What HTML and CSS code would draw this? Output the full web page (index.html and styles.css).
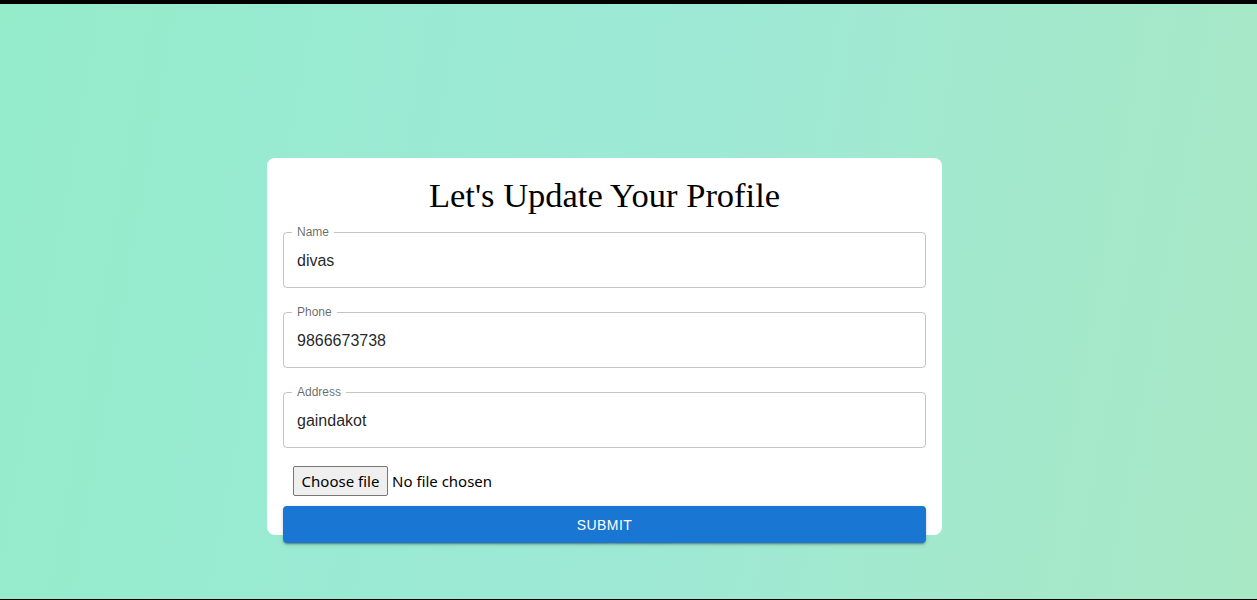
FILE: index.html
```html
<!DOCTYPE html>
<html lang="en">
<head>
<meta charset="utf-8">
<title>Update Profile</title>
<link rel="stylesheet" href="styles.css">
</head>
<body>
<div class="topbar"></div>
<main class="page">
  <form class="card">
    <h1 class="title">Let's Update Your Profile</h1>
    <fieldset class="field">
      <legend>Name</legend>
      <input class="field-input" type="text" value="divas">
    </fieldset>
    <fieldset class="field">
      <legend>Phone</legend>
      <input class="field-input" type="text" value="9866673738">
    </fieldset>
    <fieldset class="field">
      <legend>Address</legend>
      <input class="field-input" type="text" value="gaindakot">
    </fieldset>
    <div class="file-row">
      <span class="file-btn">Choose file</span>
      <span class="file-text">No file chosen</span>
    </div>
    <button class="submit" type="button">SUBMIT</button>
  </form>
</main>
<div class="bottombar"></div>
</body>
</html>
```

FILE: styles.css
```css
* { box-sizing: border-box; }
html, body { margin: 0; padding: 0; height: 100%; }
body {
  display: flex;
  flex-direction: column;
  background: linear-gradient(100deg, #94eccb 0%, #9de9d6 50%, #a8e8c5 100%);
  font-family: "Liberation Sans", Arial, sans-serif;
}
.topbar { height: 4px; background: #000; flex: none; }
.bottombar { height: 1px; background: #000; flex: none; }
.page {
  flex: 1;
  display: flex;
  justify-content: center;
  align-items: flex-start;
  padding-top: 154px;
  padding-right: 48px;
}
.card {
  width: 675px;
  height: 377px;
  background: #fff;
  border-radius: 8px;
  padding: 16px;
  display: flex;
  flex-direction: column;
}
.title {
  margin: 2px 0 0;
  font-family: "Liberation Serif", "Times New Roman", serif;
  font-weight: 400;
  font-size: 34.5px;
  line-height: 39px;
  text-align: center;
  color: #000;
}
.field {
  margin: 11px 0 0;
  padding: 0;
  border: 1px solid rgba(0,0,0,0.23);
  border-radius: 4px;
  min-width: 0;
}
.field + .field { margin-top: 18px; }
.field legend {
  margin-left: 8px;
  padding: 0 5px;
  font-size: 12px;
  line-height: 12px;
  color: rgba(0,0,0,0.6);
}
.field-input {
  display: block;
  width: 100%;
  border: 0;
  outline: 0;
  background: transparent;
  font-family: "Liberation Sans", Arial, sans-serif;
  font-size: 16px;
  line-height: 23px;
  height: 49px;
  padding: 11.5px 13px 14.5px;
  color: rgba(0,0,0,0.87);
}
.file-row {
  display: flex;
  align-items: center;
  margin: 18px 0 0 10px;
  font-family: "Noto Sans", "Open Sans", sans-serif;
  font-size: 15px;
  color: #000;
}
.file-btn {
  height: 30px;
  width: 95px;
  display: flex;
  align-items: center;
  justify-content: center;
  background: #efefef;
  border: 1px solid #767676;
  border-radius: 2px;
}
.file-text { margin-left: 4px; }
.submit {
  margin-top: 10px;
  flex: none;
  height: 37px;
  width: 100%;
  border: 0;
  border-radius: 4px;
  background: #1976d2;
  color: #fff;
  font-family: "Liberation Sans", Arial, sans-serif;
  font-size: 14px;
  letter-spacing: 0.4px;
  box-shadow: 0 3px 1px -2px rgba(0,0,0,0.2), 0 2px 2px 0 rgba(0,0,0,0.14), 0 1px 5px 0 rgba(0,0,0,0.12);
  cursor: pointer;
}
```
